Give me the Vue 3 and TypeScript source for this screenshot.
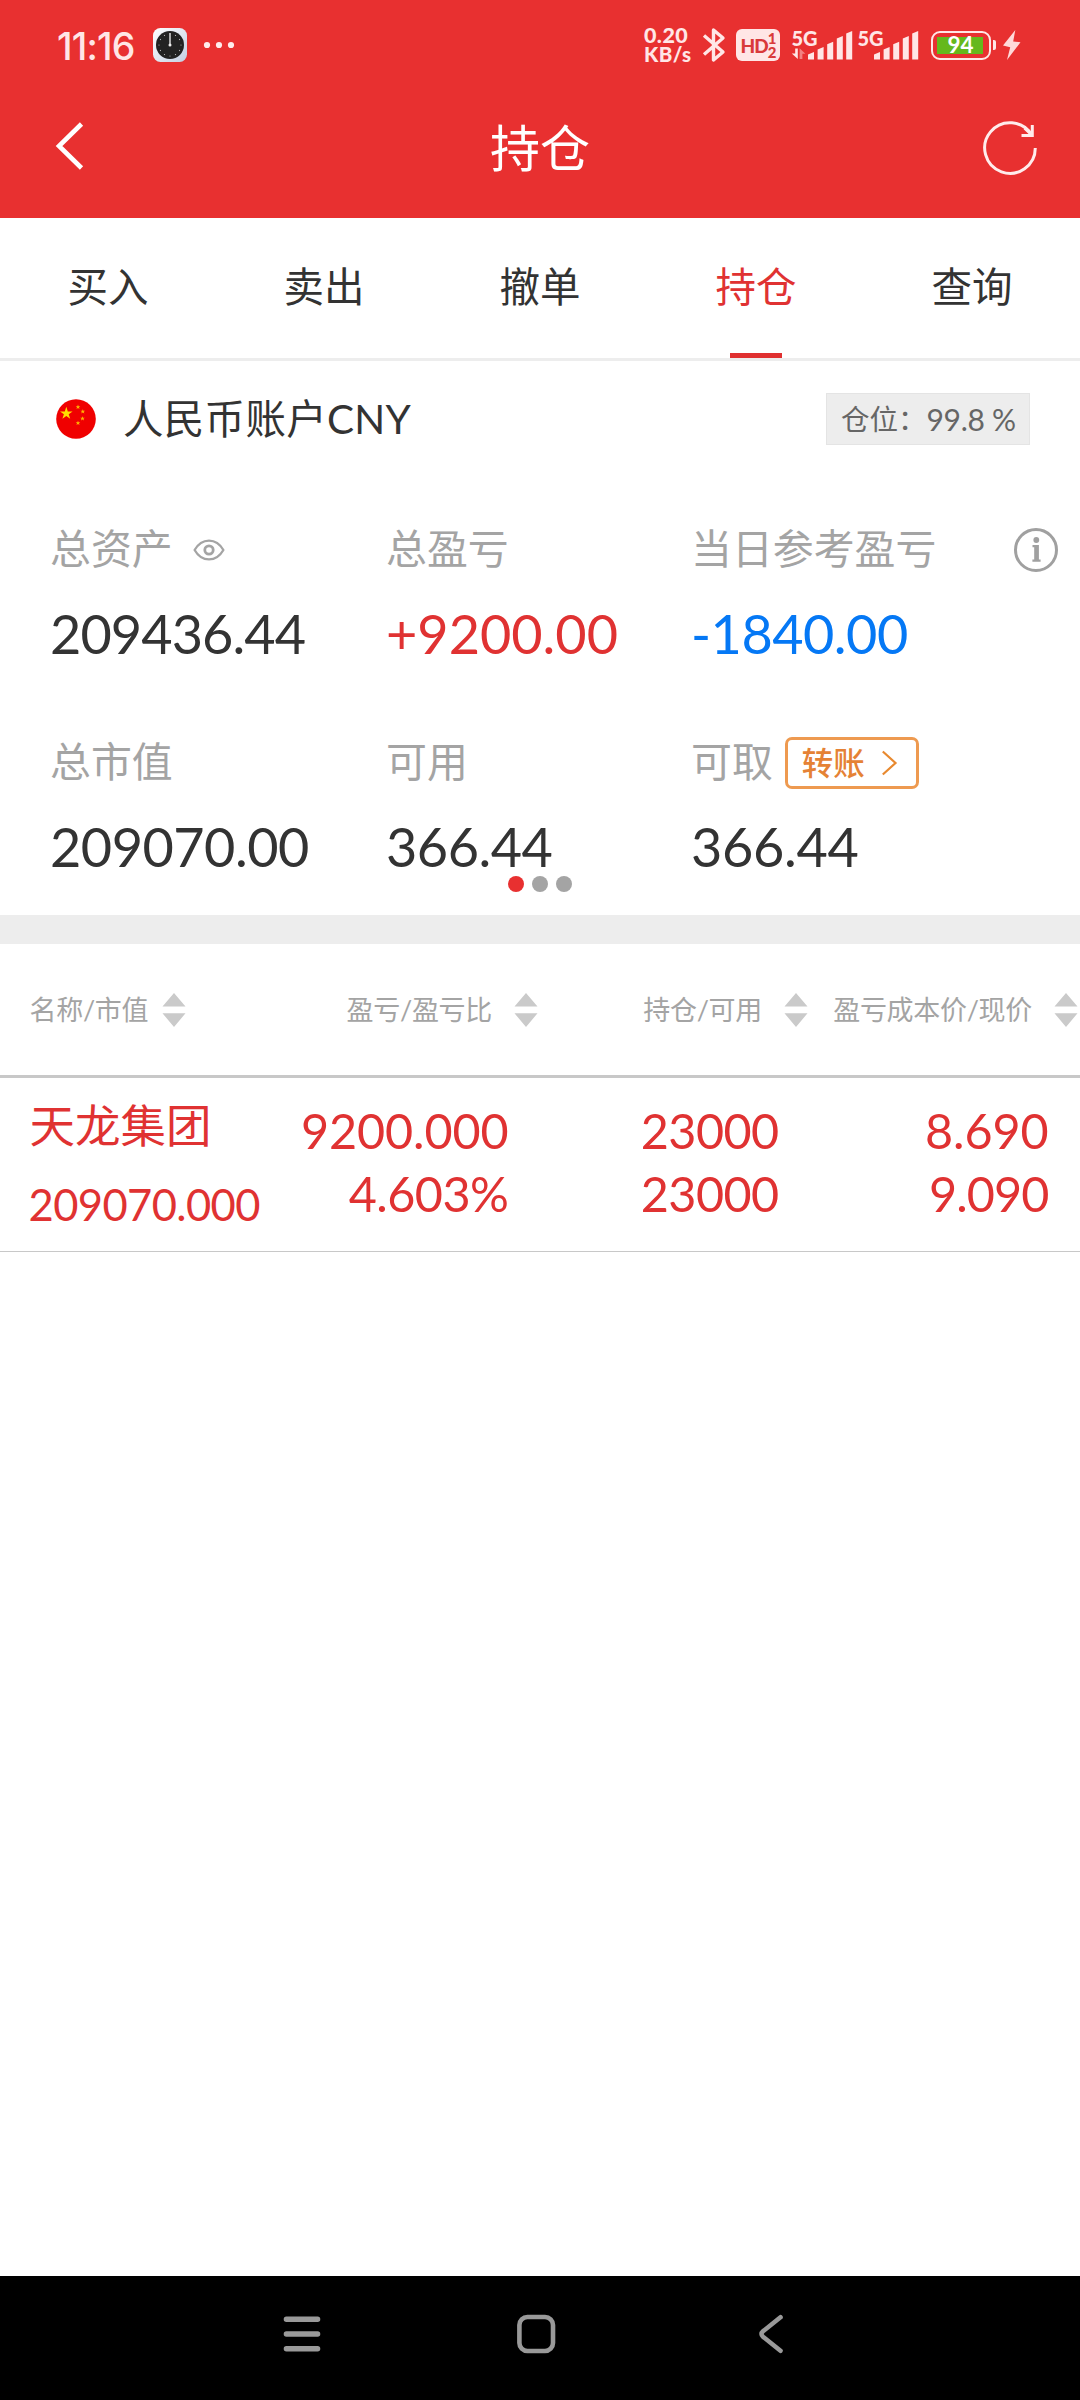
<script setup lang="ts">
interface Metric {
  label: string
  value: string
  tone?: 'up' | 'down'
  extra?: 'eye' | 'transfer'
  spacing: number
}

interface Cell {
  text: string
  spacing: number
}

const tabs: string[] = ['买入', '卖出', '撤单', '持仓', '查询']
const activeTab = '持仓'

const metrics: Metric[] = [
  { label: '总资产', value: '209436.44', extra: 'eye', spacing: -0.9 },
  { label: '总盈亏', value: '+9200.00', tone: 'up', spacing: 0 },
  { label: '当日参考盈亏', value: '-1840.00', tone: 'down', spacing: -0.5 },
  { label: '总市值', value: '209070.00', spacing: -0.5 },
  { label: '可用', value: '366.44', spacing: -0.5 },
  { label: '可取', value: '366.44', extra: 'transfer', spacing: -0.3 },
]

const columns: string[] = ['名称/市值', '盈亏/盈亏比', '持仓/可用', '盈亏成本价/现价']

const holding = {
  name: '天龙集团',
  marketValue: '209070.000',
  cells: [
    [{ text: '9200.000', spacing: -0.1 }, { text: '4.603%', spacing: -0.5 }],
    [{ text: '23000', spacing: -0.6 }, { text: '23000', spacing: -0.6 }],
    [{ text: '8.690', spacing: -0.1 }, { text: '9.090', spacing: -0.9 }],
  ] as Cell[][],
}

const bars = [
  { x: 16, top: 21 },
  { x: 25.6, top: 16 },
  { x: 35.2, top: 10.7 },
  { x: 44.8, top: 5 },
  { x: 54.2, top: 0 },
]

const dialTicks = Array.from({ length: 12 }, (_, i) => i * 30)
</script>

<template>
  <div class="screen">
    <header class="top">
      <div class="status">
        <span class="clock">11:16</span>
        <svg class="app-icon" width="34" height="34" viewBox="0 0 34 34">
          <defs>
            <linearGradient id="tile" x1="0" y1="0" x2="1" y2="1">
              <stop offset="0" stop-color="#fff" />
              <stop offset="1" stop-color="#c3cfe2" />
            </linearGradient>
          </defs>
          <rect width="34" height="34" rx="7.5" fill="url(#tile)" />
          <circle cx="17" cy="17" r="14" fill="#222" />
          <circle
            v-for="angle in dialTicks"
            :key="angle"
            cx="17"
            cy="6"
            r=".6"
            fill="#b8b8b8"
            :transform="`rotate(${angle} 17 17)`"
          />
          <path d="M17 5v12" stroke="#bbb" stroke-width="1.8" />
          <circle cx="17" cy="17" r="1.5" fill="#eee" />
        </svg>
        <svg class="more" width="32" height="8" viewBox="0 0 32 8" fill="#ffecec">
          <circle cx="4" cy="4" r="3.1" /><circle cx="16" cy="4" r="3.1" /><circle cx="28" cy="4" r="3.1" />
        </svg>

        <div class="speed"><span>0.20</span><span class="unit">KB/s</span></div>
        <svg class="bluetooth" width="24" height="38" viewBox="0 0 24 38" fill="none" stroke="#ffe6e6" stroke-width="3.4">
          <path d="M2 9.5 21 26 11.5 34V4L21 12 2 28.5" stroke-linejoin="round" />
        </svg>
        <div class="hd"><span>HD</span><span class="sims"><i>1</i><i>2</i></span></div>
        <div v-for="sim in 2" :key="sim" class="signal">
          <span>5G</span>
          <svg width="60" height="29" viewBox="0 0 60 29" fill="#ffe6e6">
            <path
              v-for="bar in bars"
              :key="bar.x"
              :d="`M${bar.x} ${bar.top + 2.6}L${bar.x + 6} ${bar.top}V28.4H${bar.x}Z`"
            />
            <g v-if="sim === 1">
              <path d="M3.2 17.5h2.6v10.6L-.2 22.6h3.4z" />
              <path d="M7.6 28V17.3l5.8 5.4h-3V28z" opacity=".45" />
            </g>
          </svg>
        </div>
        <div class="battery"><span>94</span></div>
        <i class="nub"></i>
        <svg class="bolt" width="18" height="30" viewBox="0 0 18 30" fill="#ffd9d9">
          <path d="M12.3 0 0 15.5 7.2 17.2 4 30 17.5 12.3 10.2 11.4z" />
        </svg>
      </div>
      <div class="titlebar">
        <svg class="back" width="30" height="50" viewBox="0 0 30 50" fill="none" stroke="#fff" stroke-width="4.6">
          <path d="M26.5 3 4 25l22.5 22" />
        </svg>
        <h1>持仓</h1>
        <svg width="56" height="56" viewBox="0 0 56 56" fill="none" stroke="#ffecec" stroke-width="3">
          <path d="M53.3 28A25.3 25.3 0 1 1 49.8 15.2" />
          <path d="M50.3 5v10.4H39.5M42.6 8.2 49.8 14.8" />
        </svg>
      </div>
    </header>

    <nav class="tabs">
      <div v-for="tab in tabs" :key="tab" :class="['tab', { active: tab === activeTab }]">{{ tab }}</div>
    </nav>

    <section class="panel">
      <div class="account">
        <svg width="40" height="40" viewBox="0 0 40 40">
          <circle cx="20" cy="20" r="19.8" fill="#f00000" />
          <path d="M10.3 7.8l1.5 4.6h4.8l-3.9 2.8 1.5 4.6-3.9-2.8-3.9 2.8 1.5-4.6L4 12.4h4.8z" fill="#ffde00" />
          <g fill="#ffb400">
            <path id="small-star" d="M22 5.6l.6 1.6h1.7l-1.3 1 .5 1.7-1.5-1-1.5 1 .5-1.7-1.3-1h1.7z" />
            <use href="#small-star" x="4.8" y="4.6" />
            <use href="#small-star" x="4.5" y="11.6" />
            <use href="#small-star" x="0" y="16.1" />
          </g>
        </svg>
        <span class="account-name">人民币账户CNY</span>
        <span class="ratio"><span>仓位：</span><span class="percent">99.8 %</span></span>
      </div>

      <div class="metrics">
        <div v-for="metric in metrics" :key="metric.label" class="metric">
          <div class="label">
            <span>{{ metric.label }}</span>
            <svg v-if="metric.extra === 'eye'" class="eye" width="32" height="24" viewBox="0 0 32 24" fill="none" stroke="#a4a4a4" stroke-width="2.3">
              <path d="M1.6 12C8.8-.6 23.2-.6 30.4 12 23.2 24.6 8.8 24.6 1.6 12Z" stroke-linejoin="round" />
              <circle cx="16" cy="12" r="4.2" stroke-width="2.8" />
            </svg>
            <button v-if="metric.extra === 'transfer'" class="transfer">
              <span>转账</span>
              <svg width="17" height="26" viewBox="0 0 17 26" fill="none" stroke="#e8892f" stroke-width="2.2">
                <path d="M1.8 1.5 14.5 13 1.8 24.5" />
              </svg>
            </button>
            <svg v-if="metric.tone === 'down'" class="info" width="46" height="46" viewBox="0 0 46 46">
              <circle cx="23" cy="23" r="20.5" fill="none" stroke="#a0a0a0" stroke-width="3" />
              <circle cx="23.3" cy="13" r="2.9" fill="#a0a0a0" />
              <path d="M19.5 18h6.4v14.5h1.7v2.2h-8.2v-2.2h1.8V20.2h-1.7z" fill="#a0a0a0" />
            </svg>
          </div>
          <div :class="['value', metric.tone]" :style="{ letterSpacing: metric.spacing + 'px' }">{{ metric.value }}</div>
        </div>
      </div>
      <div class="pager"><i class="on"></i><i></i><i></i></div>
    </section>

    <section class="table">
      <div class="thead">
        <div v-for="column in columns" :key="column" class="th">
          <span>{{ column }}</span>
          <svg width="24" height="34" viewBox="0 0 24 34" fill="#cacaca">
            <path d="M12 0 23.5 13.5H.5zM.5 20.3h23L12 34z" />
          </svg>
        </div>
      </div>
      <div class="row">
        <div class="stock">
          <div class="name">{{ holding.name }}</div>
          <div class="market">{{ holding.marketValue }}</div>
        </div>
        <div v-for="(pair, i) in holding.cells" :key="i" class="figures">
          <div v-for="(cell, j) in pair" :key="j" :style="{ letterSpacing: cell.spacing + 'px' }">{{ cell.text }}</div>
        </div>
      </div>
    </section>

    <footer class="system">
      <svg width="38" height="46" viewBox="0 0 38 46" fill="none" stroke="#999" stroke-width="5.4" stroke-linecap="round">
        <path d="M3.4 8.3h31.2M3.4 23h31.2M3.4 37.7h31.2" />
      </svg>
      <svg class="home" width="40" height="46" viewBox="0 0 40 46" fill="none" stroke="#999" stroke-width="4.6">
        <rect x="3.4" y="6" width="33.6" height="34" rx="8" />
      </svg>
      <svg class="return" width="28" height="46" viewBox="0 0 28 46" fill="none" stroke="#999" stroke-width="4.6" stroke-linecap="round" stroke-linejoin="round">
        <path d="M23.5 6.3 6 20.3Q3 23 6 25.7L23.5 39.7" />
      </svg>
    </footer>
  </div>
</template>

<style>
body {
  margin: 0;
}
</style>

<style scoped>
.screen {
  display: flex;
  flex-direction: column;
  width: 1080px;
  height: 2400px;
  overflow: hidden;
  background: #fff;
  color: #333;
  font-family: Lato, 'Noto Sans CJK SC', sans-serif;
}

svg {
  display: block;
  flex: none;
  overflow: visible;
}

i {
  font-style: normal;
}

.top {
  height: 218px;
  background: #e83030;
  color: #ffe6e6;
}

.status {
  display: flex;
  align-items: center;
  height: 90px;
  padding-left: 57px;
  white-space: nowrap;
}

.clock {
  box-sizing: border-box;
  width: 96px;
  padding-top: 3px;
  font-family: Inter, sans-serif;
  font-size: 37.5px;
  font-weight: 500;
  line-height: 46px;
  letter-spacing: -0.8px;
}

.more {
  margin-left: 16px;
}

.speed {
  display: flex;
  flex-direction: column;
  width: 57px;
  margin-left: 409px;
  font-size: 21.5px;
  font-weight: 900;
  line-height: 19px;
  letter-spacing: 0.4px;
}

.speed .unit {
  font-size: 20.5px;
}

.bluetooth {
  margin-left: 1px;
}

.hd {
  display: flex;
  align-items: center;
  justify-content: center;
  width: 44px;
  height: 32px;
  margin-left: 10px;
  border-radius: 6px;
  background: #ffe6e6;
  color: #d93a3a;
  font-size: 19px;
  font-weight: 900;
  letter-spacing: -1px;
}

.sims {
  display: flex;
  flex-direction: column;
  font-size: 15px;
  line-height: 14px;
}

.signal {
  position: relative;
  width: 60px;
  height: 29px;
  margin-left: 11.5px;
}

.signal + .signal {
  margin-left: 6px;
}

.signal span {
  position: absolute;
  left: 0;
  top: -4px;
  font-size: 20px;
  font-weight: 900;
  line-height: 22px;
  letter-spacing: -0.1px;
}

.battery {
  display: flex;
  align-items: center;
  justify-content: center;
  box-sizing: border-box;
  width: 60px;
  height: 29px;
  margin-left: 13px;
  border: 2.7px solid #ffe6e6;
  border-radius: 9px;
  background: linear-gradient(#65b81c, #65b81c) 4px 4px / 46px 17px no-repeat;
  color: #fff;
  font-size: 22.5px;
  font-weight: 700;
  line-height: 24px;
}

.nub {
  width: 3.5px;
  height: 10px;
  margin-left: 2px;
  border-radius: 0 2px 2px 0;
  background: #ffe6e6;
}

.bolt {
  margin-left: 7px;
}

.titlebar {
  display: flex;
  align-items: center;
  justify-content: space-between;
  height: 116px;
  padding: 0 42px 0 55px;
}

.titlebar h1 {
  margin: 0 0 1px 13px;
  color: #fff;
  font-size: 50px;
  font-weight: 400;
  line-height: 60px;
}

.back {
  margin-bottom: 4px;
}

.tabs {
  display: flex;
  height: 140px;
  border-bottom: 3px solid #ededed;
}

.tab {
  display: flex;
  flex: 1;
  flex-direction: column;
  align-items: center;
  justify-content: center;
  box-sizing: border-box;
  padding-bottom: 2px;
  font-size: 40.5px;
  line-height: 60px;
}

.tab.active {
  justify-content: flex-end;
  padding: 0;
  color: #e03232;
}

.tab.active::after {
  width: 52px;
  height: 5px;
  margin-top: 36px;
  background: #e03030;
  content: '';
}

.panel {
  position: relative;
  height: 554px;
}

.account {
  display: flex;
  align-items: center;
  height: 116px;
  padding: 0 50px 0 56px;
}

.account-name {
  flex: 1;
  margin-left: 27px;
  font-size: 40.5px;
  line-height: 60px;
  letter-spacing: 0.3px;
}

.ratio {
  display: flex;
  box-sizing: border-box;
  width: 204px;
  height: 52px;
  padding-left: 14px;
  border: 1px solid #e4e4e4;
  background: #ededed;
  color: #666;
  font-size: 28.5px;
  line-height: 50px;
  white-space: pre;
}

.percent {
  font-size: 30px;
  letter-spacing: -0.3px;
}

.metrics {
  display: grid;
  grid-template-columns: 336px 305px 1fr;
  row-gap: 71px;
  padding: 45px 21px 0 50px;
}

.metric {
  display: flex;
  flex-direction: column;
  gap: 28px;
}

.label {
  display: flex;
  align-items: center;
  height: 54px;
  color: #a4a4a4;
  font-size: 40.9px;
  line-height: 54px;
}

.eye {
  margin: 2px 0 0 20px;
}

.info {
  margin: 1px 0 0 auto;
}

.transfer {
  display: flex;
  align-items: center;
  gap: 16px;
  box-sizing: border-box;
  width: 134px;
  height: 52px;
  margin: 2px 0 0 12px;
  padding: 0 0 0 14px;
  border: 3px solid #ee9a50;
  border-radius: 7px;
  background: none;
  color: #e58235;
  font: 500 31.5px / 46px Lato, 'Noto Sans CJK SC', sans-serif;
}

.value {
  height: 60px;
  font-size: 54px;
  line-height: 60px;
  white-space: nowrap;
}

.up,
.row {
  color: #e03232;
}

.down {
  color: #0578f5;
}

.pager {
  display: flex;
  position: absolute;
  left: 508px;
  bottom: 23px;
  gap: 8px;
}

.pager i {
  width: 16px;
  height: 16px;
  border-radius: 50%;
  background: #a4a4a4;
}

.pager .on {
  background: #e83030;
}

.table {
  border-top: 29px solid #ededed;
}

.thead {
  display: grid;
  grid-template-columns: repeat(4, 270px);
  height: 131px;
  border-bottom: 3px solid #c8c8c8;
}

.th {
  display: flex;
  align-items: center;
  justify-content: flex-end;
  gap: 22px;
  padding-right: 2px;
  color: #a4a4a4;
  font-size: 27px;
  letter-spacing: -0.3px;
  white-space: nowrap;
}

.th span {
  margin-bottom: 2px;
}

.th:first-child {
  justify-content: flex-start;
  gap: 14px;
  padding: 0 0 0 29.5px;
}

.row {
  display: grid;
  grid-template-columns: repeat(4, 270px);
  height: 173px;
  border-bottom: 1px solid #c8c8c8;
}

.stock {
  padding: 18px 0 0 29.5px;
}

.name {
  font-size: 45.5px;
  line-height: 60px;
}

.market {
  margin: 28px 0 0 -1px;
  font-size: 43.5px;
  line-height: 40px;
  letter-spacing: -0.6px;
}

.figures {
  padding: 21px 31.5px 0 0;
  font-size: 48.5px;
  line-height: 63px;
  text-align: right;
}

.system {
  display: flex;
  align-items: center;
  box-sizing: border-box;
  height: 124px;
  margin-top: auto;
  padding: 0 0 8px 283px;
  background: #000;
}

.home {
  margin-left: 195px;
}

.return {
  margin-left: 200.5px;
}
</style>
